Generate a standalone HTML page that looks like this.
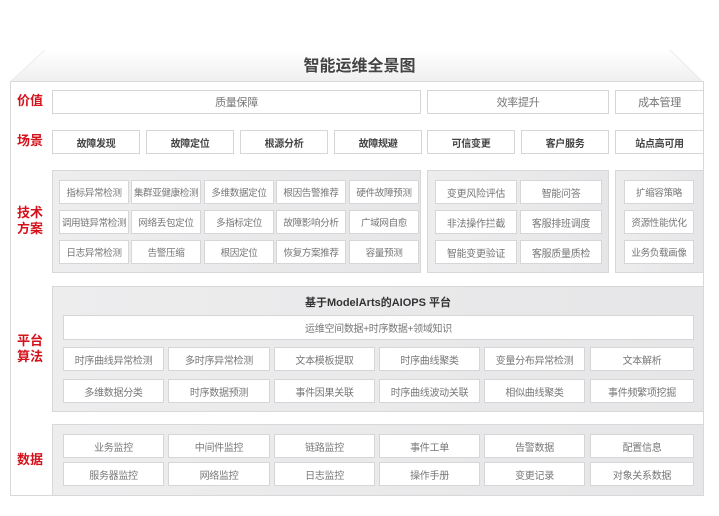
<!DOCTYPE html>
<html><head><meta charset="utf-8"><style>
*{margin:0;padding:0;box-sizing:border-box}
body{width:719px;height:516px;background:#fff;position:relative;overflow:hidden;font-family:"Liberation Sans","Noto Sans CJK SC",sans-serif}
.a{position:absolute}
.b{position:absolute;background:#fff;border:1px solid #d6d6d6;color:#777;font-size:10px;display:flex;align-items:center;justify-content:center;white-space:nowrap;letter-spacing:-0.3px}
.t{font-size:9.6px;letter-spacing:-0.4px}
.s{font-weight:bold;color:#444}
.p{position:absolute;background:linear-gradient(90deg,#ededee,#e6e6e8);border:1px solid #d8d8d8}
.l{position:absolute;color:#d5121c;font-weight:bold;font-size:13px;line-height:16px;left:17px}
.v{font-size:11px;color:#777}
</style></head><body>
<svg class="a" style="left:0;top:0" width="719" height="516">
<defs><linearGradient id="g" x1="0" y1="0" x2="0" y2="1"><stop offset="0" stop-color="#fff"/><stop offset="1" stop-color="#efefef"/></linearGradient></defs>
<polygon points="45,50 670,50 703,82 10,82" fill="url(#g)"/>
<line x1="45" y1="50" x2="10" y2="82" stroke="#ececec"/>
<line x1="670" y1="50" x2="703" y2="82" stroke="#ececec"/>
<rect x="10.5" y="81.5" width="693" height="414" fill="none" stroke="#d8d8d8"/>
</svg>
<div class="a" style="left:0;width:719px;top:52px;text-align:center;font-size:16px;color:#444;font-weight:bold">智能运维全景图</div>
<div class="l" style="top:93px">价值</div>
<div class="l" style="top:133px">场景</div>
<div class="l" style="top:205px">技术<br>方案</div>
<div class="l" style="top:333px">平台<br>算法</div>
<div class="l" style="top:452px">数据</div>

<div class="b v" style="left:52px;top:90px;width:369px;height:24px">质量保障</div>
<div class="b v" style="left:427px;top:90px;width:182px;height:24px">效率提升</div>
<div class="b v" style="left:615px;top:90px;width:89px;height:24px">成本管理</div>

<div class="b s" style="left:52px;top:130px;width:88px;height:24px">故障发现</div>
<div class="b s" style="left:146px;top:130px;width:88px;height:24px">故障定位</div>
<div class="b s" style="left:240px;top:130px;width:88px;height:24px">根源分析</div>
<div class="b s" style="left:334px;top:130px;width:88px;height:24px">故障规避</div>
<div class="b s" style="left:427px;top:130px;width:88px;height:24px">可信变更</div>
<div class="b s" style="left:521px;top:130px;width:88px;height:24px">客户服务</div>
<div class="b s" style="left:615px;top:130px;width:89px;height:24px">站点高可用</div>

<div class="p" style="left:52px;top:170px;width:369px;height:103px"></div>
<div class="p" style="left:427px;top:170px;width:182px;height:103px"></div>
<div class="p" style="left:615px;top:170px;width:89px;height:103px"></div>

<div class="b t" style="left:59px;top:180px;width:70px;height:24px">指标异常检测</div>
<div class="b t" style="left:131px;top:180px;width:70px;height:24px">集群亚健康检测</div>
<div class="b t" style="left:204px;top:180px;width:70px;height:24px">多维数据定位</div>
<div class="b t" style="left:276px;top:180px;width:70px;height:24px">根因告警推荐</div>
<div class="b t" style="left:349px;top:180px;width:70px;height:24px">硬件故障预测</div>
<div class="b t" style="left:59px;top:210px;width:70px;height:24px">调用链异常检测</div>
<div class="b t" style="left:131px;top:210px;width:70px;height:24px">网络丢包定位</div>
<div class="b t" style="left:204px;top:210px;width:70px;height:24px">多指标定位</div>
<div class="b t" style="left:276px;top:210px;width:70px;height:24px">故障影响分析</div>
<div class="b t" style="left:349px;top:210px;width:70px;height:24px">广域网自愈</div>
<div class="b t" style="left:59px;top:240px;width:70px;height:24px">日志异常检测</div>
<div class="b t" style="left:131px;top:240px;width:70px;height:24px">告警压缩</div>
<div class="b t" style="left:204px;top:240px;width:70px;height:24px">根因定位</div>
<div class="b t" style="left:276px;top:240px;width:70px;height:24px">恢复方案推荐</div>
<div class="b t" style="left:349px;top:240px;width:70px;height:24px">容量预测</div>

<div class="b" style="left:435px;top:180px;width:82px;height:24px">变更风险评估</div>
<div class="b" style="left:520px;top:180px;width:82px;height:24px">智能问答</div>
<div class="b" style="left:435px;top:210px;width:82px;height:24px">非法操作拦截</div>
<div class="b" style="left:520px;top:210px;width:82px;height:24px">客服排班调度</div>
<div class="b" style="left:435px;top:240px;width:82px;height:24px">智能变更验证</div>
<div class="b" style="left:520px;top:240px;width:82px;height:24px">客服质量质检</div>

<div class="b t" style="left:624px;top:180px;width:70px;height:24px">扩缩容策略</div>
<div class="b t" style="left:624px;top:210px;width:70px;height:24px">资源性能优化</div>
<div class="b t" style="left:624px;top:240px;width:70px;height:24px">业务负载画像</div>

<div class="p" style="left:52px;top:286px;width:652px;height:126px"></div>
<div class="a" style="left:52px;width:652px;top:294px;text-align:center;font-size:11px;font-weight:bold;color:#333">基于ModelArts的AIOPS 平台</div>
<div class="b" style="left:63px;top:315px;width:631px;height:25px">运维空间数据+时序数据+领域知识</div>

<div class="b" style="left:63px;top:347px;width:101px;height:24px">时序曲线异常检测</div>
<div class="b" style="left:168px;top:347px;width:102px;height:24px">多时序异常检测</div>
<div class="b" style="left:274px;top:347px;width:101px;height:24px">文本模板提取</div>
<div class="b" style="left:379px;top:347px;width:101px;height:24px">时序曲线聚类</div>
<div class="b" style="left:484px;top:347px;width:101px;height:24px">变量分布异常检测</div>
<div class="b" style="left:590px;top:347px;width:104px;height:24px">文本解析</div>
<div class="b" style="left:63px;top:379px;width:101px;height:24px">多维数据分类</div>
<div class="b" style="left:168px;top:379px;width:102px;height:24px">时序数据预测</div>
<div class="b" style="left:274px;top:379px;width:101px;height:24px">事件因果关联</div>
<div class="b" style="left:379px;top:379px;width:101px;height:24px">时序曲线波动关联</div>
<div class="b" style="left:484px;top:379px;width:101px;height:24px">相似曲线聚类</div>
<div class="b" style="left:590px;top:379px;width:104px;height:24px">事件频繁项挖掘</div>

<div class="p" style="left:52px;top:424px;width:652px;height:72px"></div>
<div class="b" style="left:63px;top:434px;width:101px;height:24px">业务监控</div>
<div class="b" style="left:168px;top:434px;width:102px;height:24px">中间件监控</div>
<div class="b" style="left:274px;top:434px;width:101px;height:24px">链路监控</div>
<div class="b" style="left:379px;top:434px;width:101px;height:24px">事件工单</div>
<div class="b" style="left:484px;top:434px;width:101px;height:24px">告警数据</div>
<div class="b" style="left:590px;top:434px;width:104px;height:24px">配置信息</div>
<div class="b" style="left:63px;top:462px;width:101px;height:24px">服务器监控</div>
<div class="b" style="left:168px;top:462px;width:102px;height:24px">网络监控</div>
<div class="b" style="left:274px;top:462px;width:101px;height:24px">日志监控</div>
<div class="b" style="left:379px;top:462px;width:101px;height:24px">操作手册</div>
<div class="b" style="left:484px;top:462px;width:101px;height:24px">变更记录</div>
<div class="b" style="left:590px;top:462px;width:104px;height:24px">对象关系数据</div>
</body></html>
